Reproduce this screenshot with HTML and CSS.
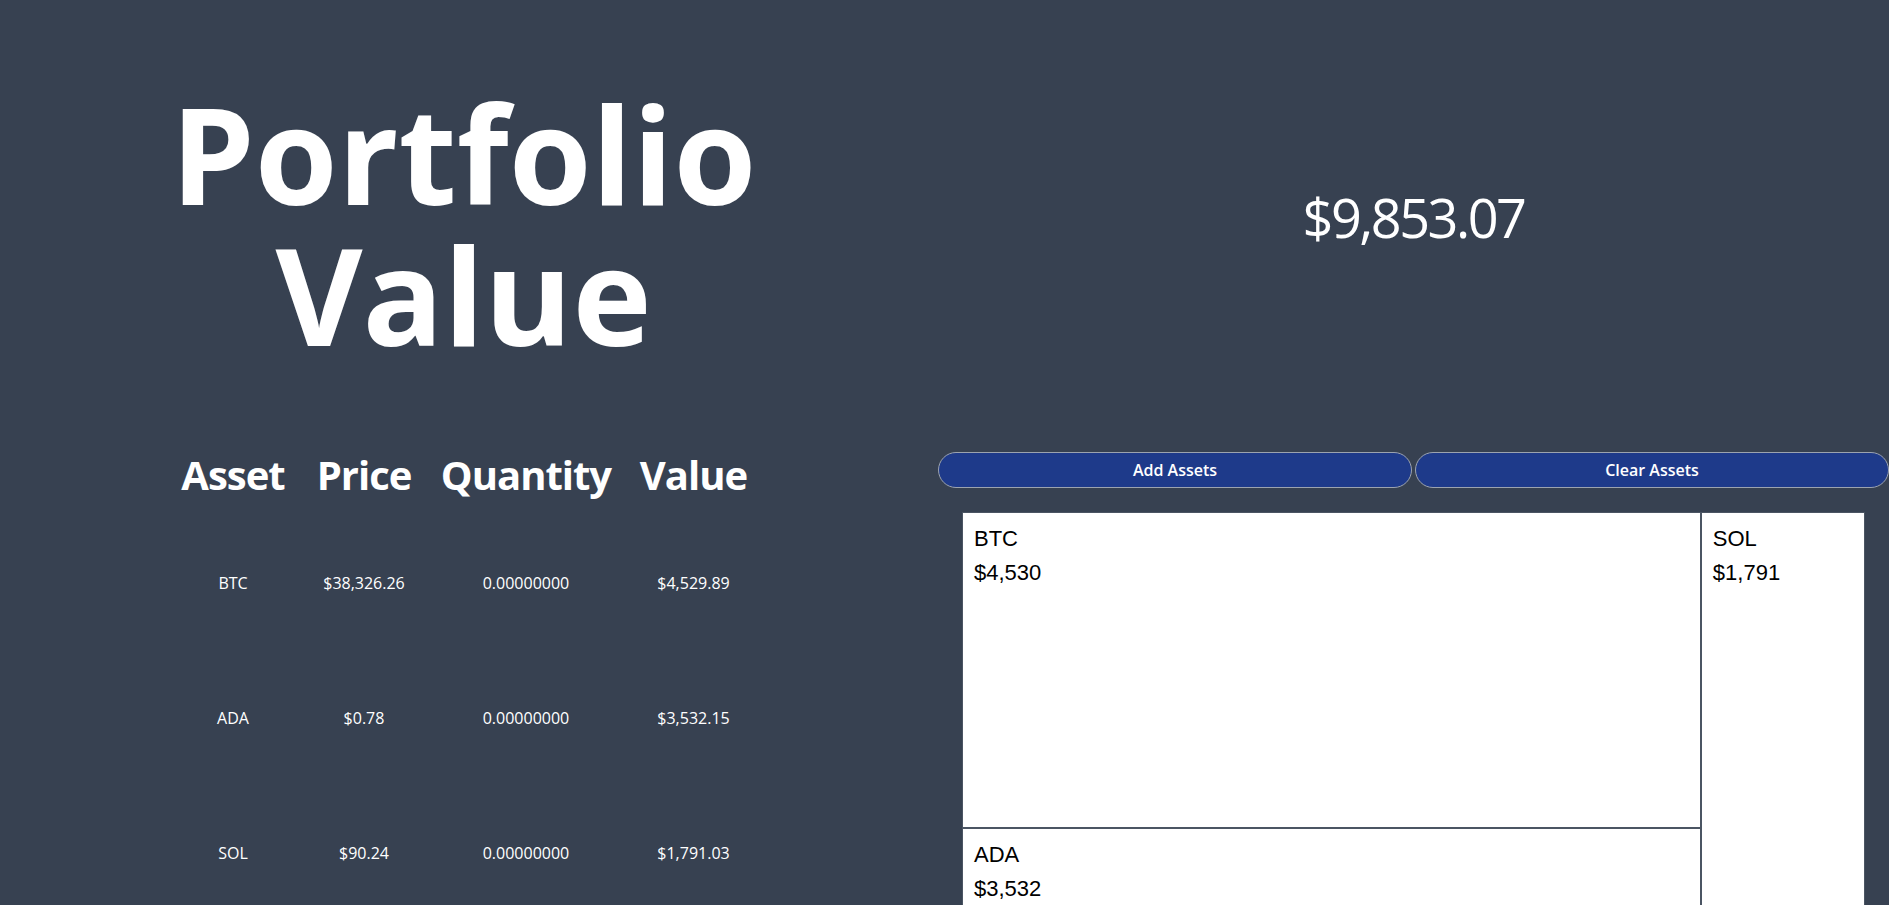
FILE: index.html
```html
<!DOCTYPE html>
<html lang="en">
<head>
<meta charset="utf-8">
<title>Portfolio Value</title>
<link rel="stylesheet" href="styles.css">
</head>
<body>
<div class="page">
  <section class="hero">
    <h1 class="title">Portfolio<br>Value</h1>
  </section>
  <section class="total">
    <p class="total-value">$9,853.07</p>
  </section>
  <section class="holdings">
    <table class="assets">
      <colgroup>
        <col class="c-asset"><col class="c-price"><col class="c-qty"><col class="c-value">
      </colgroup>
      <thead>
        <tr><th>Asset</th><th>Price</th><th>Quantity</th><th>Value</th></tr>
      </thead>
      <tbody>
        <tr><td>BTC</td><td>$38,326.26</td><td>0.00000000</td><td>$4,529.89</td></tr>
        <tr><td>ADA</td><td>$0.78</td><td>0.00000000</td><td>$3,532.15</td></tr>
        <tr><td>SOL</td><td>$90.24</td><td>0.00000000</td><td>$1,791.03</td></tr>
      </tbody>
    </table>
  </section>
  <section class="side">
    <div class="actions">
      <button class="btn" type="button">Add Assets</button>
      <button class="btn" type="button">Clear Assets</button>
    </div>
    <div class="treemap">
      <div class="tm-col" style="flex-basis:81.82%">
        <div class="tm-cell" style="flex-basis:56.19%"><span class="tm-name">BTC</span><span class="tm-val">$4,530</span></div>
        <div class="tm-cell" style="flex-basis:43.81%"><span class="tm-name">ADA</span><span class="tm-val">$3,532</span></div>
      </div>
      <div class="tm-col" style="flex-basis:18.18%">
        <div class="tm-cell" style="flex-basis:100%"><span class="tm-name">SOL</span><span class="tm-val">$1,791</span></div>
      </div>
    </div>
  </section>
</div>
</body>
</html>
```

FILE: styles.css
```css
* { box-sizing: border-box; }

html, body {
  margin: 0;
  padding: 0;
  background: #374151;
}

body {
  font-family: "Open Sans", "Noto Sans", sans-serif;
  color: #ffffff;
}

.page {
  display: grid;
  grid-template-columns: 927px 1fr;
  grid-template-rows: 448px auto;
  column-gap: 11px;
}

.hero {
  display: flex;
  align-items: center;
  justify-content: center;
}

.title {
  margin: 0;
  font-size: 134px;
  line-height: 141px;
  font-weight: 700;
  text-align: center;
  letter-spacing: 0;
}

.total {
  display: flex;
  align-items: center;
  justify-content: center;
}

.total-value {
  margin: 0 0 14px;
  font-size: 54px;
  font-weight: 400;
  letter-spacing: -2.5px;
}

.holdings {
  padding-top: 3px;
}

.assets {
  margin: 0 auto;
  table-layout: fixed;
  border-collapse: collapse;
  border-spacing: 0;
  width: 597px;
}

.c-asset { width: 136px; }
.c-price { width: 126px; }
.c-qty { width: 198px; }
.c-value { width: 137px; }

.assets th {
  height: 64px;
  padding: 0;
  font-size: 40px;
  line-height: 48px;
  font-weight: 700;
  vertical-align: top;
  text-align: center;
  letter-spacing: -1px;
}

.assets td {
  height: 135px;
  padding: 0;
  font-size: 16px;
  line-height: 20px;
  text-align: center;
  vertical-align: middle;
}

.side {
  display: flex;
  flex-direction: column;
}

.actions {
  display: flex;
  gap: 3px;
  margin-top: 4px;
}

.btn {
  flex: 1 1 0;
  height: 36px;
  border: 1px solid #9ca3af;
  border-radius: 18px;
  background: #1e3a8a;
  color: #ffffff;
  font-family: "Open Sans", "Noto Sans", sans-serif;
  font-size: 16px;
  font-weight: 600;
  cursor: pointer;
}

.treemap {
  display: flex;
  height: 562px;
  margin: 24px 24px 0;
}

.tm-col {
  display: flex;
  flex-direction: column;
  flex-grow: 0;
  flex-shrink: 0;
}

.tm-cell {
  flex-grow: 0;
  flex-shrink: 0;
  display: flex;
  flex-direction: column;
  align-items: flex-start;
  background: #ffffff;
  border: 1px solid #4b5563;
  padding: 9px 11px;
  color: #000000;
  font-family: "Liberation Sans", Arial, sans-serif;
  font-size: 22px;
  line-height: 34px;
}
```
